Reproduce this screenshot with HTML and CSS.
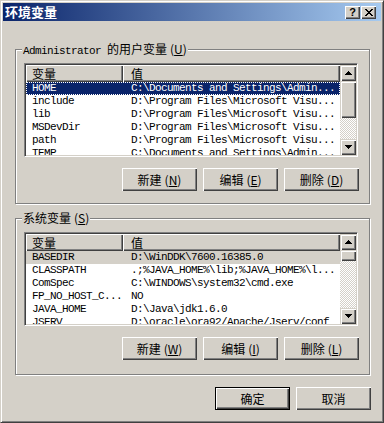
FILE: index.html
```html
<!DOCTYPE html>
<html lang="zh-CN">
<head>
  <meta charset="UTF-8">
  <title>环境变量</title>
  <link rel="stylesheet" href="styles.css">
</head>
<body>
  <div class="window">
    <div class="titlebar">
      <span class="title">环境变量</span>
      <div class="cap-btns">
        <span class="cap-btn cap-help">?</span>
        <span class="cap-btn">
          <svg width="8" height="7" viewBox="0 0 8 7" shape-rendering="crispEdges"><path d="M0 0h2v1h1v1h2V1h1V0h2v1H7v1H6v1H5v1h1v1h1v1h1v1H6V6H5V5H3v1H2v1H0V6h1V5h1V4h1V3H2V2H1V1H0z"/></svg>
        </span>
      </div>
    </div>

    <div class="content">
      <!-- 用户变量 -->
      <div class="group group-user">
        <span class="group-label"><span class="mono">Administrator </span>的用户变量<span class="key">(<u>U</u>)</span></span>
        <div class="listview">
          <div class="lv-main">
            <div class="lv-header">
              <div class="hd hd-name">变量</div>
              <div class="hd hd-value">值</div>
            </div>
            <div class="row selected"><span class="c-name">HOME</span><span class="c-value">C:\Documents and Settings\Admin...</span></div>
            <div class="row"><span class="c-name">include</span><span class="c-value">D:\Program Files\Microsoft Visu...</span></div>
            <div class="row"><span class="c-name">lib</span><span class="c-value">D:\Program Files\Microsoft Visu...</span></div>
            <div class="row"><span class="c-name">MSDevDir</span><span class="c-value">D:\Program Files\Microsoft Visu...</span></div>
            <div class="row"><span class="c-name">path</span><span class="c-value">D:\Program Files\Microsoft Visu...</span></div>
            <div class="row"><span class="c-name">TEMP</span><span class="c-value">C:\Documents and Settings\Admin...</span></div>
          </div>
          <div class="scrollbar">
            <div class="sb-btn"><svg width="7" height="4" viewBox="0 0 7 4" shape-rendering="crispEdges"><path d="M3 0h1v1h1v1h1v1h1v1H0V3h1V2h1V1h1z"/></svg></div>
            <div class="sb-thumb thumb-user"></div>
            <div class="sb-track"></div>
            <div class="sb-btn"><svg width="7" height="4" viewBox="0 0 7 4" shape-rendering="crispEdges"><path d="M0 0h7v1H6v1H5v1H4v1H3V3H2V2H1V1H0z"/></svg></div>
          </div>
        </div>
        <div class="btn-row">
          <button class="btn">新建<span class="key">(<u>N</u>)</span></button>
          <button class="btn">编辑<span class="key">(<u>E</u>)</span></button>
          <button class="btn">删除<span class="key">(<u>D</u>)</span></button>
        </div>
      </div>

      <!-- 系统变量 -->
      <div class="group group-sys">
        <span class="group-label">系统变量<span class="key">(<u>S</u>)</span></span>
        <div class="listview">
          <div class="lv-main">
            <div class="lv-header">
              <div class="hd hd-name">变量</div>
              <div class="hd hd-value">值</div>
            </div>
            <div class="row inactive"><span class="c-name">BASEDIR</span><span class="c-value">D:\WinDDK\7600.16385.0</span></div>
            <div class="row"><span class="c-name">CLASSPATH</span><span class="c-value">.;%JAVA_HOME%\lib;%JAVA_HOME%\l...</span></div>
            <div class="row"><span class="c-name">ComSpec</span><span class="c-value">C:\WINDOWS\system32\cmd.exe</span></div>
            <div class="row"><span class="c-name">FP_NO_HOST_C...</span><span class="c-value">NO</span></div>
            <div class="row"><span class="c-name">JAVA_HOME</span><span class="c-value">D:\Java\jdk1.6.0</span></div>
            <div class="row"><span class="c-name">JSERV</span><span class="c-value">D:\oracle\ora92/Apache/Jserv/conf</span></div>
          </div>
          <div class="scrollbar">
            <div class="sb-btn"><svg width="7" height="4" viewBox="0 0 7 4" shape-rendering="crispEdges"><path d="M3 0h1v1h1v1h1v1h1v1H0V3h1V2h1V1h1z"/></svg></div>
            <div class="sb-thumb thumb-sys"></div>
            <div class="sb-track"></div>
            <div class="sb-btn"><svg width="7" height="4" viewBox="0 0 7 4" shape-rendering="crispEdges"><path d="M0 0h7v1H6v1H5v1H4v1H3V3H2V2H1V1H0z"/></svg></div>
          </div>
        </div>
        <div class="btn-row">
          <button class="btn">新建<span class="key">(<u>W</u>)</span></button>
          <button class="btn">编辑<span class="key">(<u>I</u>)</span></button>
          <button class="btn">删除<span class="key">(<u>L</u>)</span></button>
        </div>
      </div>

      <div class="dlg-btns">
        <button class="btn btn-default">确定</button>
        <button class="btn">取消</button>
      </div>
    </div>
  </div>
</body>
</html>
```

FILE: styles.css
```css
* {
  box-sizing: border-box;
}
body {
  margin: 0;
  background: #d4d0c8;
  font-family: "Noto Sans CJK SC", sans-serif;
  font-size: 12px;
  color: #000;
}

.window {
  width: 384px;
  height: 423px;
  background: #d4d0c8;
  border: 1px solid;
  border-color: #d4d0c8 #404040 #404040 #d4d0c8;
  box-shadow: inset 1px 1px #fff, inset -1px -1px #808080;
  padding: 2px;
}

.titlebar {
  height: 18px;
  display: flex;
  align-items: center;
  justify-content: space-between;
  padding: 0 5px 0 2px;
  background: linear-gradient(to right, #0a246a, #a6caf0);
}
.title {
  color: #fff;
  font-weight: bold;
  font-size: 13px;
  line-height: 18px;
}
.cap-btns {
  display: flex;
  gap: 1px;
}
.cap-btn {
  width: 15px;
  height: 13px;
  background: #d4d0c8;
  box-shadow: inset 1px 1px #fff, inset -1px -1px #404040, inset -2px -2px #808080;
  display: flex;
  align-items: center;
  justify-content: center;
}
.cap-help {
  font-family: "Liberation Sans", sans-serif;
  font-weight: bold;
  font-size: 11px;
  line-height: 13px;
}

.content {
  padding: 28px 10px 0 12px;
}

/* 分组框 */
.group {
  position: relative;
  border: 1px solid #808080;
  box-shadow: inset 1px 1px #fff, 1px 1px #fff;
  padding: 13px 0 0 8px;
  margin-right: 1px;
}
.group-user {
  height: 155px;
}
.group-sys {
  height: 157px;
  margin-top: 14px;
}
.group-label {
  position: absolute;
  left: 6px;
  top: -8px;
  padding: 0 1px;
  background: #d4d0c8;
  line-height: 14px;
  white-space: nowrap;
}
.mono {
  font-family: "Liberation Mono", monospace;
  font-size: 11px;
  letter-spacing: -0.6px;
}
.key {
  margin-left: 3px;
}

/* 列表 */
.listview {
  width: 334px;
  height: 94px;
  display: flex;
  background: #fff;
  border: 1px solid;
  border-color: #808080 #fff #fff #808080;
  box-shadow: inset 1px 1px #404040, inset -1px -1px #d4d0c8;
  padding: 1px;
}
.lv-main {
  flex: 1;
  overflow: hidden;
}
.lv-header {
  display: flex;
  height: 17px;
}
.hd {
  background: #d4d0c8;
  box-shadow: inset 1px 1px #fff, inset -1px -1px #404040, inset -2px -2px #808080;
  line-height: 17px;
  padding-left: 6px;
}
.hd-name {
  width: 97px;
}
.hd-value {
  flex: 1;
  padding-left: 8px;
}
.row {
  display: flex;
  height: 13px;
  line-height: 13px;
  font-family: "Liberation Mono", monospace;
  font-size: 11px;
  letter-spacing: -0.6px;
  white-space: nowrap;
}
.c-name {
  width: 97px;
  flex: none;
  padding-left: 6px;
  overflow: hidden;
}
.c-value {
  padding-left: 8px;
}
.selected {
  background: #0a246a;
  color: #fff;
  outline: 1px dotted #fff;
  outline-offset: -1px;
}
.inactive {
  background: #d4d0c8;
}

/* 滚动条 */
.scrollbar {
  width: 16px;
  display: flex;
  flex-direction: column;
}
.sb-btn, .sb-thumb {
  background: #d4d0c8;
  box-shadow: inset 1px 1px #d4d0c8, inset 2px 2px #fff, inset -1px -1px #404040, inset -2px -2px #808080;
}
.sb-btn {
  height: 16px;
  flex: none;
  display: flex;
  align-items: center;
  justify-content: center;
}
.thumb-user {
  height: 37px;
}
.thumb-sys {
  height: 11px;
}
.sb-track {
  flex: 1;
  background: repeating-conic-gradient(#fff 0 25%, #d4d0c8 0 50%) 0 0 / 2px 2px;
}

/* 按钮 */
.btn-row {
  width: 335px;
  display: flex;
  justify-content: flex-end;
  gap: 6px;
  margin-top: 11px;
}
.btn {
  width: 75px;
  height: 23px;
  padding: 0;
  border: 0;
  background: #d4d0c8;
  box-shadow: inset 1px 1px #fff, inset -1px -1px #404040, inset -2px -2px #808080;
  font-family: "Noto Sans CJK SC", sans-serif;
  font-size: 12px;
  line-height: 14px;
  color: #000;
}
.btn-default {
  border: 1px solid #000;
}
.dlg-btns {
  display: flex;
  justify-content: flex-end;
  gap: 6px;
  margin-top: 12px;
}
```
